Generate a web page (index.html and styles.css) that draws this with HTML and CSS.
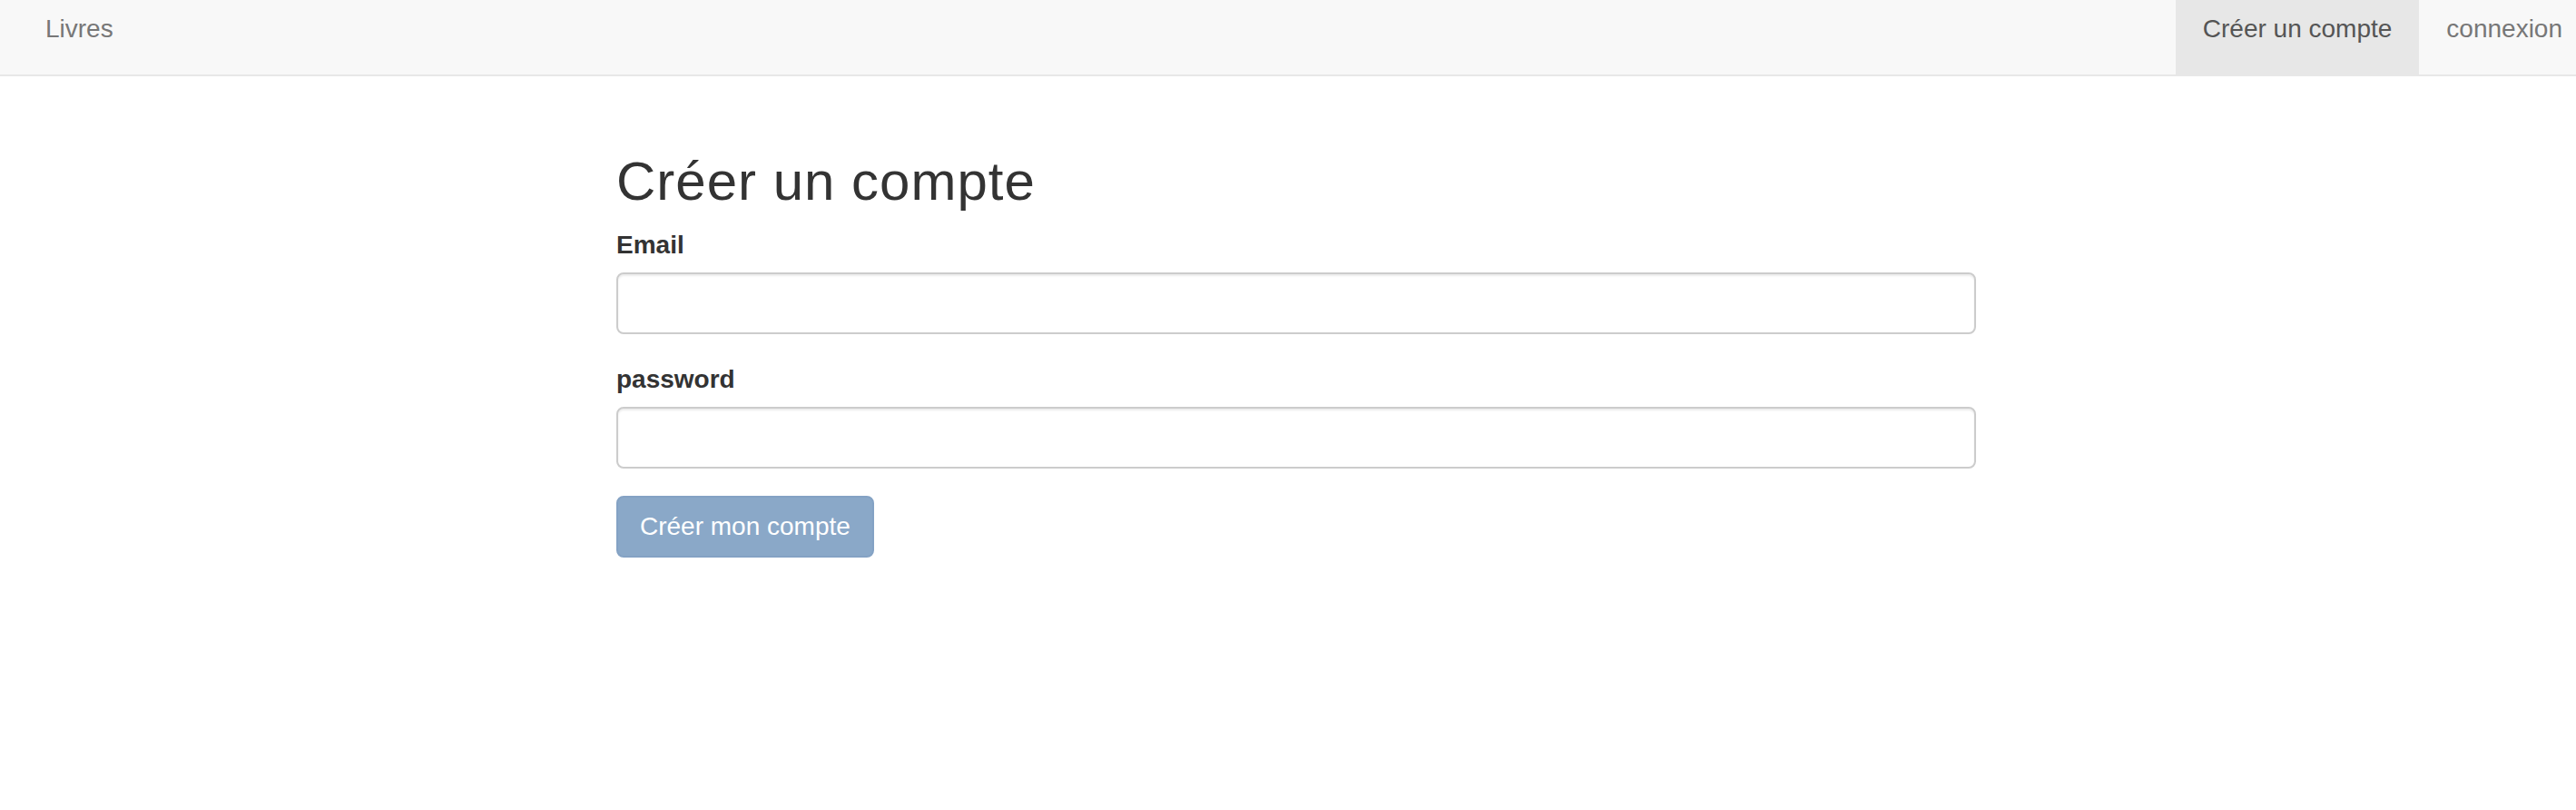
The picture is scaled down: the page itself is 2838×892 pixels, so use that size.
FILE: index.html
```html
<!DOCTYPE html>
<html lang="fr">
<head>
<meta charset="utf-8">
<title>Créer un compte</title>
<link rel="stylesheet" href="styles.css">
</head>
<body>
<nav class="navbar">
  <a class="brand" href="#">Livres</a>
  <ul class="nav-right">
    <li><a class="nav-link active" href="#">Créer un compte</a></li>
    <li><a class="nav-link last" href="#">connexion</a></li>
  </ul>
</nav>
<main class="page">
  <h1 class="title">Créer un compte</h1>
  <form class="form">
    <div class="form-group">
      <label class="label" for="email">Email</label>
      <input class="input" id="email" type="email">
    </div>
    <div class="form-group">
      <label class="label" for="password">password</label>
      <input class="input" id="password" type="password">
    </div>
    <button class="btn" type="button" disabled>Créer mon compte</button>
  </form>
</main>
</body>
</html>
```
FILE: styles.css
```css
html, body {
  margin: 0;
  padding: 0;
  background: #fff;
  overflow: hidden;
}
body {
  font-family: "Liberation Sans", Arial, Helvetica, sans-serif;
  color: #333;
  width: 2838px;
  height: 892px;
}
.navbar {
  display: flex;
  justify-content: space-between;
  align-items: stretch;
  height: 82px;
  background: #f8f8f8;
  border-bottom: 2px solid #e7e7e7;
}
.brand {
  display: block;
  box-sizing: border-box;
  height: 82px;
  padding: 12px 30px 0 50px;
  line-height: 40px;
  font-size: 28px;
  color: #777;
  text-decoration: none;
}
.nav-right {
  display: flex;
  list-style: none;
  margin: 0;
  padding: 0;
}
.nav-link {
  display: block;
  box-sizing: border-box;
  height: 82px;
  padding: 12px 30px 0 30px;
  line-height: 40px;
  font-size: 28px;
  color: #777;
  text-decoration: none;
}
.nav-link.active {
  background: #e7e7e7;
  color: #555;
}
.nav-link.last {
  padding-right: 15px;
}
.page {
  width: 1498px;
  margin-left: 679px;
  padding-top: 83px;
}
.title {
  margin: 0 0 17px 0;
  font-size: 60px;
  line-height: 66px;
  font-weight: 500;
  letter-spacing: 1px;
  color: #333;
}
.form {
  display: flex;
  flex-direction: column;
  align-items: flex-start;
}
.form-group {
  display: flex;
  flex-direction: column;
  width: 100%;
  margin-bottom: 30px;
}
.label {
  font-size: 28px;
  line-height: 40px;
  font-weight: bold;
  color: #333;
  margin-bottom: 10px;
}
.input {
  box-sizing: border-box;
  width: 100%;
  height: 68px;
  border: 2px solid #ccc;
  border-radius: 8px;
  background: #fff;
  box-shadow: inset 0 2px 2px rgba(0,0,0,0.075);
  font-size: 28px;
  padding: 12px 24px;
  outline: none;
}
.btn {
  box-sizing: border-box;
  height: 68px;
  padding: 0 24px;
  border: 2px solid #84a2c4;
  border-radius: 8px;
  background: #8aa8c8;
  color: #fff;
  font-family: "Liberation Sans", Arial, Helvetica, sans-serif;
  font-size: 28px;
  line-height: 40px;
}
```
